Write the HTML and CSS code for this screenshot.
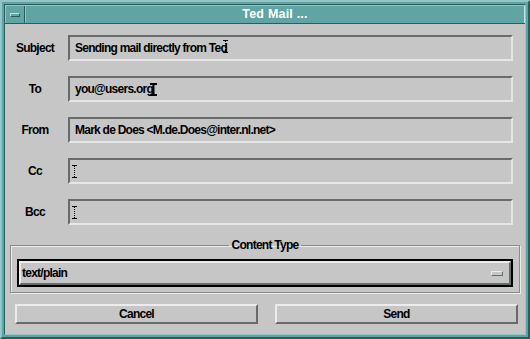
FILE: index.html
```html
<!DOCTYPE html>
<html lang="en">
<head>
    <meta charset="UTF-8">
    <title>Ted Mail ...</title>
    <link rel="stylesheet" href="styles.css">
</head>
<body>
    <div class="window">
        <div class="frame">
            <div class="titlebar">
                <div class="menu-btn"><span class="menu-bar"></span></div>
                <div class="title">Ted Mail ...</div>
            </div>

            <div class="content">
                <div class="fields">
                    <label class="label">Subject</label>
                    <div class="field">Sending mail directly from Te<span class="overlap">d<svg class="caret dotted" width="5" height="13" viewBox="0 0 5 13"><path d="M0 0.5h5M0 12.5h5" stroke="#000"/><path d="M2.5 1v11" stroke="#000" stroke-dasharray="1 1"/></svg></span></div>

                    <label class="label">To</label>
                    <div class="field">you@users.org<svg class="caret solid" width="7" height="13" viewBox="0 0 7 13"><path d="M0 1h7M0 12h7" stroke="#000" stroke-width="2"/><path d="M3.5 1v11" stroke="#000" stroke-width="2"/></svg></div>

                    <label class="label">From</label>
                    <div class="field">Mark de Does &lt;M.de.Does@inter.nl.net&gt;</div>

                    <label class="label">Cc</label>
                    <div class="field"><svg class="caret empty" width="5" height="13" viewBox="0 0 5 13"><path d="M0 0.5h5M0 12.5h5" stroke="#000"/><path d="M2.5 1v11" stroke="#000" stroke-dasharray="1 1"/></svg></div>

                    <label class="label">Bcc</label>
                    <div class="field"><svg class="caret empty" width="5" height="13" viewBox="0 0 5 13"><path d="M0 0.5h5M0 12.5h5" stroke="#000"/><path d="M2.5 1v11" stroke="#000" stroke-dasharray="1 1"/></svg></div>
                </div>

                <fieldset class="group">
                    <legend>Content Type</legend>
                    <div class="dropdown">
                        <div class="dropdown-inner">
                            <span>text/plain</span>
                            <span class="indicator"></span>
                        </div>
                    </div>
                </fieldset>

                <div class="buttons">
                    <button class="btn">Cancel</button>
                    <button class="btn">Send</button>
                </div>
            </div>
        </div>
    </div>
</body>
</html>
```

FILE: styles.css
```css
body {
    margin: 0;
    font-family: "Liberation Sans", Arial, sans-serif;
    font-weight: bold;
    font-size: 12px;
    letter-spacing: -0.75px;
    color: #000;
}
.window {
    width: 530px;
    height: 339px;
    box-sizing: border-box;
    background-color: #5fa3a3;
    border: 2px solid;
    border-color: #92c6c6 #2c5d5d #2c5d5d #92c6c6;
    padding: 2px;
}
.frame {
    height: 100%;
    box-sizing: border-box;
    border: 1px solid;
    border-color: #2c5d5d #92c6c6 #92c6c6 #2c5d5d;
    display: flex;
    flex-direction: column;
}
.titlebar {
    height: 19px;
    box-sizing: border-box;
    display: flex;
    background-color: #60a4a4;
    border-top: 1px solid #92c6c6;
    border-bottom: 1px solid #2c5d5d;
}
.menu-btn {
    width: 18px;
    border-left: 1px solid #92c6c6;
    border-right: 1px solid #2c5d5d;
    display: flex;
    align-items: center;
    justify-content: center;
}
.menu-bar {
    width: 8px;
    height: 2px;
    border: 1px solid;
    border-color: #c4e2e2 #2c5d5d #2c5d5d #c4e2e2;
}
.title {
    flex: 1;
    border-left: 1px solid #92c6c6;
    border-right: 1px solid #c4e2e2;
    color: #fff;
    text-align: center;
    line-height: 17px;
    font-size: 12.5px;
    letter-spacing: 0.2px;
}
.content {
    flex: 1;
    background-color: #c6c6c6;
    padding: 11px 7px 0 10px;
    display: flex;
    flex-direction: column;
}
.fields {
    display: grid;
    grid-template-columns: 50px 1fr;
    column-gap: 8px;
    row-gap: 15px;
    margin-left: -5px;
    margin-right: 5px;
}
.label {
    text-align: center;
    align-self: center;
}
.field {
    height: 26px;
    box-sizing: border-box;
    border: 2px solid;
    border-color: #676b6b #e6e6e6 #e6e6e6 #676b6b;
    padding-left: 5px;
    display: flex;
    align-items: center;
}
.overlap {
    position: relative;
}
.caret.dotted {
    position: absolute;
    left: 3px;
    top: -1px;
}
.caret.solid {
    margin-left: -3px;
}
.caret.empty {
    margin-left: -3px;
}
.group {
    margin: 13px -2px 0 -5px;
    padding: 7px 6px 5px 6px;
    border: 1px solid #8a8c8c;
    box-shadow: inset 1px 1px 0 #ececec, 1px 1px 0 #ececec;
}
.group legend {
    margin: 0 auto;
    padding: 0 3px;
    line-height: 14px;
}
.dropdown {
    height: 28px;
    box-sizing: border-box;
    border: 2px solid #000;
}
.dropdown-inner {
    height: 100%;
    box-sizing: border-box;
    border: 2px solid;
    border-color: #ececec #676b6b #676b6b #ececec;
    padding: 0 6px 0 1px;
    display: flex;
    align-items: center;
    justify-content: space-between;
}
.indicator {
    width: 10px;
    height: 3px;
    border: 1px solid;
    border-color: #ececec #676b6b #676b6b #ececec;
}
.buttons {
    display: flex;
    gap: 17px;
    margin-top: 11px;
}
.btn {
    flex: 1;
    height: 20px;
    background-color: #c6c6c6;
    border: 2px solid;
    border-color: #ececec #676b6b #676b6b #ececec;
    font: inherit;
    letter-spacing: inherit;
    color: #000;
    padding: 0;
}
```
